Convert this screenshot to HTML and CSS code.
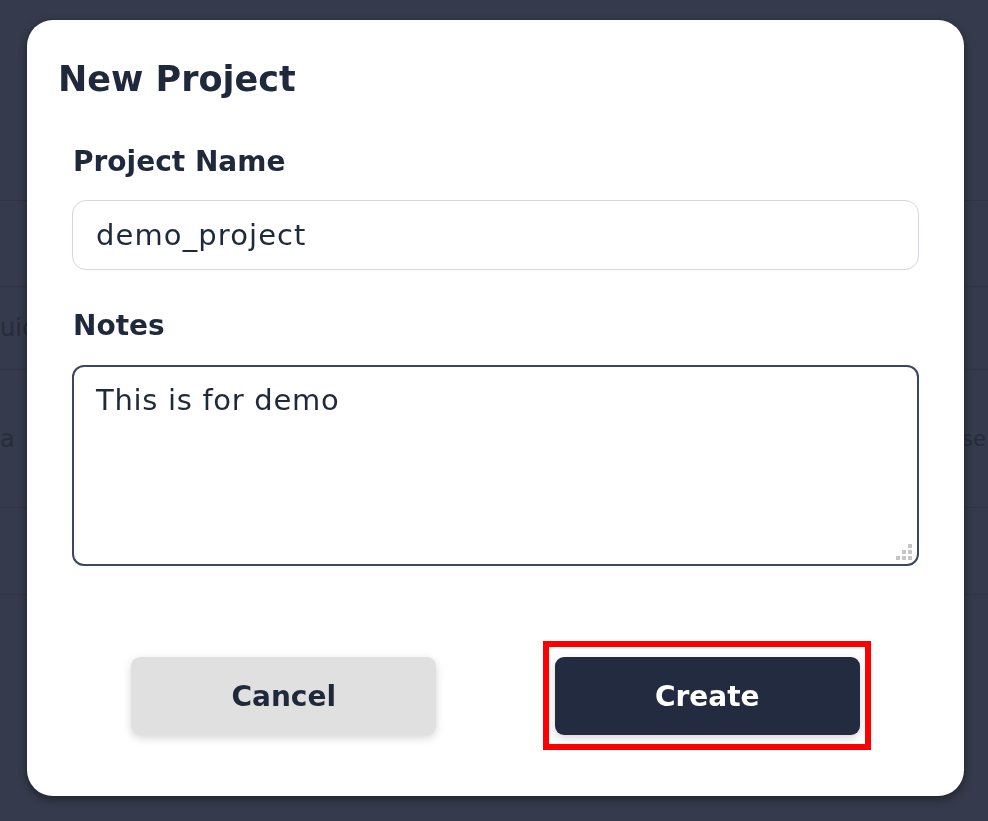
FILE: index.html
```html
<!DOCTYPE html>
<html lang="en">
<head>
<meta charset="utf-8">
<title>New Project</title>
<link rel="stylesheet" href="styles.css">
</head>
<body>
  <div class="page">
    <div class="page-header"></div>
    <div class="page-row page-row-sub"></div>
    <div class="page-row page-row-a"><span class="ghost">uic</span></div>
    <div class="page-row page-row-b"><span class="ghost">a</span><span class="ghost ghost-small">se</span></div>
    <div class="page-row page-row-c"></div>
  </div>

  <div class="overlay">
    <div class="modal">
      <h1 class="modal-title">New Project</h1>
      <form class="form">
        <label class="field-label" for="pname">Project Name</label>
        <input class="field-input" id="pname" type="text" value="demo_project">
        <label class="field-label field-label-notes" for="pnotes">Notes</label>
        <div class="textarea-wrap">
          <textarea class="field-textarea" id="pnotes">This is for demo</textarea>
          <svg class="resizer" width="16" height="16" viewBox="0 0 16 16" aria-hidden="true">
            <rect x="12" y="0" width="4" height="4"/>
            <rect x="6" y="6" width="4" height="4"/>
            <rect x="12" y="6" width="4" height="4"/>
            <rect x="0" y="12" width="4" height="4"/>
            <rect x="6" y="12" width="4" height="4"/>
            <rect x="12" y="12" width="4" height="4"/>
          </svg>
        </div>
        <div class="actions">
          <button type="button" class="btn btn-cancel">Cancel</button>
          <button type="button" class="btn btn-create">Create<span class="highlight"></span></button>
        </div>
      </form>
    </div>
  </div>
</body>
</html>
```

FILE: styles.css
```css
* { box-sizing: border-box; }

html, body {
  margin: 0;
  padding: 0;
  width: 988px;
  height: 821px;
  overflow: hidden;
}

body {
  background: #353b4c;
  font-family: "DejaVu Sans", "Liberation Sans", sans-serif;
  color: #1e293b;
}

/* dimmed page behind the dialog */
.page {
  display: flex;
  flex-direction: column;
}
.page-header {
  height: 201px;
  border-bottom: 1px solid #2f3544;
}
.page-row {
  border-bottom: 1px solid #2f3544;
  display: flex;
  align-items: center;
  justify-content: space-between;
  font-size: 24px;
  color: #262c3b;
}
.page-row-sub { height: 86px; }
.page-row-a { height: 83px; }
.page-row-b { height: 138px; padding-right: 2px; }
.page-row-c { height: 87px; }
.ghost-small { font-size: 21px; }

/* dialog */
.overlay {
  position: fixed;
  inset: 0;
  padding: 20px 24px 25px 27px;
}

.modal {
  width: 937px;
  height: 776px;
  background: #ffffff;
  border-radius: 26px;
  box-shadow: 0 3px 10px rgba(0, 0, 0, 0.45);
  padding: 38px 45px 61px 31px;
  display: flex;
  flex-direction: column;
}

.modal-title {
  margin: 0;
  font-size: 35px;
  line-height: 42px;
  font-weight: 700;
  color: #1e293b;
}

.form {
  display: flex;
  flex-direction: column;
  padding-left: 14px;
  margin-top: 45px;
}

.field-label {
  font-size: 28px;
  line-height: 34px;
  font-weight: 700;
  color: #1e293b;
  margin-left: 1px;
}

.field-input {
  margin-top: 21px;
  height: 70px;
  width: 847px;
  border: 1.5px solid #d4d7e1;
  border-radius: 14px;
  padding: 0 23px;
  font-family: "DejaVu Sans", "Liberation Sans", sans-serif;
  font-size: 29px;
  letter-spacing: 1.1px;
  color: #1e293b;
  background: #fff;
  outline: none;
}

.field-label-notes {
  margin-top: 39px;
}

.textarea-wrap {
  position: relative;
  margin-top: 22px;
  width: 847px;
  height: 201px;
}

.field-textarea {
  display: block;
  width: 847px;
  height: 201px;
  border: 2px solid #3a4762;
  border-radius: 12px;
  padding: 16px 22px;
  font-family: "DejaVu Sans", "Liberation Sans", sans-serif;
  font-size: 29px;
  letter-spacing: 0.7px;
  line-height: normal;
  color: #1e293b;
  resize: none;
  outline: none;
  background: #fff;
}

.resizer {
  position: absolute;
  right: 7px;
  bottom: 6px;
  fill: #c6c6c6;
}

.actions {
  margin-top: 91px;
  display: flex;
  justify-content: space-around;
  width: 847px;
}

.btn {
  position: relative;
  width: 305px;
  height: 78px;
  border: none;
  border-radius: 9px;
  font-family: "DejaVu Sans", "Liberation Sans", sans-serif;
  font-size: 28px;
  font-weight: 700;
  cursor: pointer;
  box-shadow: 0 3px 8px rgba(0, 0, 0, 0.16);
}

.btn-cancel {
  background: #e0e0e0;
  color: #1e293b;
}

.btn-create {
  background: #222b40;
  color: #ffffff;
}

.highlight {
  position: absolute;
  top: -16px;
  left: -12px;
  right: -11px;
  bottom: -15px;
  border: 6px solid #ff0000;
  pointer-events: none;
}
```
